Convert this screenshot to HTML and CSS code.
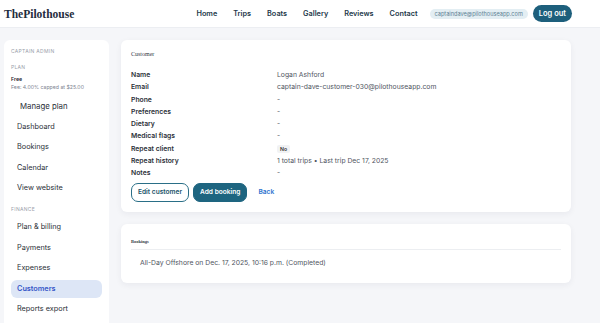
FILE: index.html
```html
<!DOCTYPE html>
<html>
<head>
<meta charset="utf-8">
<link rel="stylesheet" href="styles.css">
</head>
<body>
<header class="topbar">
  <div class="brand">ThePilothouse</div>
  <nav class="topnav">
    <a>Home</a><a>Trips</a><a>Boats</a><a>Gallery</a><a>Reviews</a><a>Contact</a>
    <span class="pill">captaindave@pilothouseapp.com</span>
    <button class="logout">Log out</button>
  </nav>
</header>
<div class="layout">
  <aside class="sidebar">
    <div class="sec-title">Captain admin</div>
    <div class="sec-title plan-title">Plan</div>
    <div class="plan-name">Free</div>
    <div class="plan-fee">Fee: 4.00% capped at $25.00</div>
    <a class="side-link manage">Manage plan</a>
    <a class="side-link">Dashboard</a>
    <a class="side-link">Bookings</a>
    <a class="side-link">Calendar</a>
    <a class="side-link">View website</a>
    <div class="sec-title fin">Finance</div>
    <a class="side-link">Plan &amp; billing</a>
    <a class="side-link">Payments</a>
    <a class="side-link">Expenses</a>
    <a class="side-link active">Customers</a>
    <a class="side-link">Reports export</a>
  </aside>
  <main class="content">
    <section class="card">
      <h2 class="card-title">Customer</h2>
      <dl class="details">
        <dt>Name</dt><dd>Logan Ashford</dd>
        <dt>Email</dt><dd>captain-dave-customer-030@pilothouseapp.com</dd>
        <dt>Phone</dt><dd>-</dd>
        <dt>Preferences</dt><dd>-</dd>
        <dt>Dietary</dt><dd>-</dd>
        <dt>Medical flags</dt><dd>-</dd>
        <dt>Repeat client</dt><dd><span class="tag">No</span></dd>
        <dt>Repeat history</dt><dd>1 total trips • Last trip Dec 17, 2025</dd>
        <dt>Notes</dt><dd>-</dd>
      </dl>
      <div class="actions">
        <button class="btn outline">Edit customer</button>
        <button class="btn solid">Add booking</button>
        <a class="back">Back</a>
      </div>
    </section>
    <section class="card bookings">
      <h2 class="card-title">Bookings</h2>
      <ul class="booking-list">
        <li>All-Day Offshore on Dec. 17, 2025, 10:16 p.m. (Completed)</li>
      </ul>
    </section>
  </main>
</div>
</body>
</html>
```

FILE: styles.css
```css
* { box-sizing: border-box; }
html, body { margin: 0; padding: 0; }
body {
  background: #f5f6f9;
  font-family: Inter, "Noto Sans", sans-serif;
  color: #2b2f36;
  height: 323px;
  overflow: hidden;
  -webkit-font-smoothing: antialiased;
}
.topbar {
  height: 28px;
  background: #fff;
  border-bottom: 1px solid #eceef2;
  display: flex;
  align-items: center;
  justify-content: space-between;
  padding: 0 28px 0 4px;
}
.brand {
  font-family: "Liberation Serif", serif;
  font-weight: 700;
  font-size: 11.5px;
  color: #1f2d3d;
}
.topnav {
  display: flex;
  align-items: center;
}
.topnav a {
  font-size: 7.3px;
  font-weight: 600;
  color: #24384a;
  margin-right: 16px;
}
.topnav a:nth-child(6) { margin-right: 12px; }
.pill {
  background: #e3eef3;
  color: #5d8193;
  font-size: 5.6px;
  padding: 2px 5px;
  border-radius: 8px;
  margin-right: 5px;
}
.logout {
  background: #1d5f7c;
  color: #fff;
  border: 0;
  font-family: inherit;
  font-size: 7.5px;
  font-weight: 600;
  height: 17px;
  padding: 0 6px;
  border-radius: 9px;
}
.layout {
  display: grid;
  grid-template-columns: 105px 450px;
  column-gap: 12px;
  padding: 12px 0 0 4px;
}
.sidebar {
  background: #fff;
  border-radius: 6px 6px 0 0;
  padding: 7px 7px 0;
  display: flex;
  flex-direction: column;
  height: 283px;
  overflow: hidden;
}
.sec-title {
  flex: none;
  font-size: 5px;
  text-transform: uppercase;
  color: #9aa0aa;
  letter-spacing: 0.3px;
  margin-top: 1px;
  height: 10px;
}
.plan-title { margin-top: 6px; }
.plan-name {
  flex: none;
  font-size: 5.2px;
  font-weight: 600;
  color: #1f2430;
  margin-top: 2px;
}
.plan-fee {
  flex: none;
  font-size: 5.2px;
  color: #7c8390;
  margin-top: 2px;
}
.side-link {
  display: block;
  flex: none;
  font-size: 7.3px;
  color: #2a2f37;
  padding: 0 6px;
  height: 18.6px;
  line-height: 18.6px;
  border-radius: 6px;
  margin-bottom: 2px;
}
.side-link.manage {
  padding-left: 9px;
  margin-top: 7px;
  font-size: 7.8px;
  margin-bottom: 2px;
}
.sec-title.fin { margin-top: 6px; height: 10px; margin-bottom: 2px; }
.side-link.active {
  background: #dde6f6;
  color: #3657c8;
  font-weight: 600;
}
.content {
  display: flex;
  flex-direction: column;
  gap: 12px;
}
.card {
  background: #fff;
  border-radius: 6px;
  padding: 11px 10px 10px;
  box-shadow: 0 2px 6px rgba(30, 40, 60, 0.06);
}
.card-title {
  font-family: "Liberation Serif", serif;
  font-weight: 400;
  font-size: 6px;
  color: #333a45;
  margin: 0 0 12px;
}
.details {
  display: grid;
  grid-template-columns: 146px 1fr;
  margin: 0;
}
.details dt, .details dd {
  margin: 0;
  font-size: 6.8px;
  height: 12.3px;
  line-height: 12.3px;
}
.details dt { font-weight: 600; color: #2b3038; }
.details dd { color: #50565f; }
.tag {
  display: inline-block;
  background: #f1f2f4;
  font-size: 5.2px;
  font-weight: 600;
  color: #333;
  padding: 0 3px;
  line-height: 8px;
  border-radius: 2px;
}
.actions {
  display: flex;
  align-items: center;
  gap: 4px;
  margin-top: 3px;
}
.btn {
  font-family: inherit;
  font-size: 6.6px;
  font-weight: 600;
  height: 19px;
  border-radius: 7px;
  padding: 0 6px;
}
.btn.outline {
  background: #fff;
  border: 1px solid #2a6f87;
  color: #22556a;
}
.btn.solid {
  background: #1e6580;
  border: 1px solid #1e6580;
  color: #fff;
}
.back {
  font-size: 6.6px;
  font-weight: 600;
  color: #2f74d0;
  margin-left: 7px;
}
.bookings { padding-bottom: 14px; }
.bookings .card-title {
  font-size: 4.5px;
  font-weight: 700;
  margin: 4px 0 7px;
  padding-bottom: 5px;
  border-bottom: 1px solid #eceef1;
}
.booking-list {
  list-style: none;
  margin: 0;
  padding: 0 0 0 9px;
  font-size: 6.8px;
  color: #50565f;
  line-height: 12px;
}
```
